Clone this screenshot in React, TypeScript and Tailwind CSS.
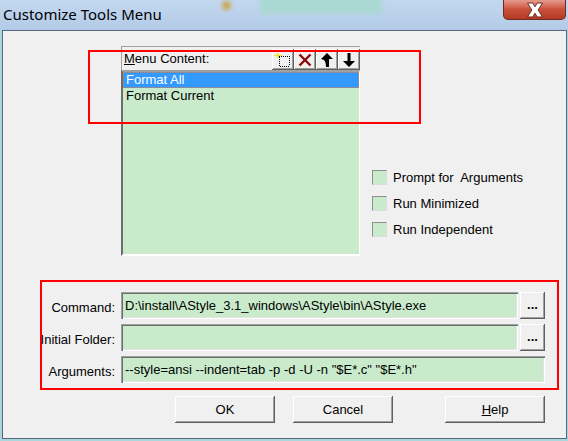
import React from "react"

const sunken =
  "shadow-[inset_1px_1px_0_#a0a0a0,inset_2px_2px_0_#6d6d6d,inset_-1px_-1px_0_#ffffff,inset_-2px_-2px_0_#e3e3e3]"
const raised =
  "shadow-[inset_-1px_-1px_0_#5f5f5f,inset_1px_1px_0_#ffffff,inset_-2px_-2px_0_#a0a0a0]"

function ToolButton({ children }: { children: React.ReactNode }) {
  return (
    <div className={`flex h-[21px] w-[22px] items-center justify-center bg-[#f0f0f0] ${raised}`}>
      {children}
    </div>
  )
}

function Checkbox({ label }: { label: string }) {
  return (
    <div className="flex h-[15px] items-center gap-[6px]">
      <div className="h-[15px] w-[15px] border border-[#8e8f8f] border-r-[#dcdcdc] border-b-[#dcdcdc] bg-[#c9ebcc]" />
      <span className="whitespace-pre">{label}</span>
    </div>
  )
}

function Field({
  label,
  value,
  browse,
}: {
  label: string
  value: string
  browse?: boolean
}) {
  return (
    <div className="flex h-[27px] items-center">
      <div className="w-[112px] pt-[4px] text-right whitespace-nowrap">{label}</div>
      <div
        className={`ml-[6px] flex h-[27px] items-center bg-[#c9ebcc] pl-[4px] pt-[1px] whitespace-pre ${sunken} ${
          browse ? "w-[397px]" : "w-[424px]"
        }`}
      >
        {value}
      </div>
      {browse && (
        <div
          className={`ml-[2px] flex h-[27px] w-[25px] items-center justify-center pb-[2px] font-bold ${raised}`}
        >
          ...
        </div>
      )}
    </div>
  )
}

function DialogButton({ children }: { children: React.ReactNode }) {
  return (
    <div
      className={`flex h-[27px] w-[100px] items-center justify-center bg-[#f0f0f0] ${raised}`}
    >
      {children}
    </div>
  )
}

export default function App() {
  return (
    <div
      className="flex h-[441px] w-[568px] flex-col overflow-hidden bg-[#a9d5de] text-[13px] text-black"
      style={{ fontFamily: '"Liberation Sans", Arial, sans-serif' }}
    >
      {/* title bar */}
      <div className="relative flex h-[30px] shrink-0 items-start justify-between bg-gradient-to-b from-[#c3d7ef] to-[#b3cbe8]">
        <div className="absolute left-[260px] top-[-4px] h-[18px] w-[122px] bg-[#a9d8d2] blur-[2px]" />
        <div className="absolute left-[222px] top-[1px] h-[9px] w-[9px] rounded-full bg-[#c9a64a] blur-[2px]" />
        <span
          className="relative ml-[3px] mt-[3px] text-[15px] leading-[22px] text-black"
          style={{ fontFamily: '"Noto Sans", "Open Sans", sans-serif' }}
        >
          Customize Tools Menu
        </span>
        <div className="relative mr-[2px] flex h-[20px] w-[63px] items-center justify-center rounded-b-[5px] border border-t-0 border-[#6b2c22] bg-gradient-to-b from-[#e59a8b] via-[#c9503b] to-[#b53a24]">
          <svg width="22" height="16" viewBox="0 0 20 15">
            <path
              d="M3 1 L8 1 L10 4.5 L12 1 L17 1 L13 7.5 L17 14 L12 14 L10 10.5 L8 14 L3 14 L7 7.5 Z"
              fill="#ffffff"
              stroke="#5a1a10"
              strokeWidth="0.8"
            />
          </svg>
        </div>
      </div>

      {/* client area */}
      <div className="relative ml-[2px] h-[409px] w-[565px] shrink-0 border border-[#576a7c] bg-[#f0f0f0]">
        <div className="flex pl-[118px] pt-[15px]">
          {/* menu content panel */}
          <div className="flex w-[239px] flex-col">
            <div className="flex h-[24px] items-center justify-between border-t border-l border-[#a0a0a0]">
              <span className="pl-[2px]">
                <span className="underline">M</span>enu Content:
              </span>
              <div className="flex self-end">
                <ToolButton>
                  <svg width="18" height="18" viewBox="0 0 18 18" shapeRendering="crispEdges">
                    <rect x="5" y="5" width="10" height="10" fill="none" stroke="#000" strokeDasharray="1 1" />
                    <path d="M4 1 L5 4 L8 4.5 L5 5 L4 8 L3 5 L0 4.5 L3 4 Z" fill="#f2e21c" />
                  </svg>
                </ToolButton>
                <ToolButton>
                  <svg width="16" height="16" viewBox="0 0 16 16">
                    <path d="M2.5 2.5 L13.5 13.5 M13.5 2.5 L2.5 13.5" stroke="#8a0a0a" strokeWidth="2.4" />
                  </svg>
                </ToolButton>
                <ToolButton>
                  <svg width="14" height="16" viewBox="0 0 14 16">
                    <path d="M7 1 L13 7 L9 7 L9 15 L6 15 Q6 10 4 8 L1 7 Z" fill="#000" />
                  </svg>
                </ToolButton>
                <ToolButton>
                  <svg width="14" height="16" viewBox="0 0 14 16">
                    <path d="M5.5 1 L8.5 1 L8.5 9 L13 9 L7 15 L1 9 L5.5 9 Z" fill="#000" />
                  </svg>
                </ToolButton>
              </div>
            </div>
            <div className="h-[186px] border-t-2 border-l-2 border-r border-b-2 border-t-[#a0a0a0] border-l-[#6d6d6d] border-r-[#ffffff] border-b-[#ffffff] bg-[#c9ebcc]">
              <div className="flex h-[16px] items-center border border-dotted border-[#e08040] bg-[#3399ff] pl-[2px] text-white">
                Format All
              </div>
              <div className="flex h-[16px] items-center pl-[3px]">Format Current</div>
            </div>
          </div>

          {/* options */}
          <div className="ml-[12px] flex flex-col gap-[11px] pt-[124px]">
            <Checkbox label="Prompt for  Arguments" />
            <Checkbox label="Run Minimized" />
            <Checkbox label="Run Independent" />
          </div>
        </div>

        {/* fields */}
        <div className="mt-[36px] flex flex-col gap-[5px]">
          <Field label="Command:" value="D:\install\AStyle_3.1_windows\AStyle\bin\AStyle.exe" browse />
          <Field label="Initial Folder:" value="" browse />
          <Field label="Arguments:" value={'--style=ansi --indent=tab -p -d -U -n "$E*.c" "$E*.h"'} />
        </div>

        {/* dialog buttons */}
        <div className="mt-[13px] flex pl-[172px]">
          <DialogButton>OK</DialogButton>
          <div className="ml-[18px]">
            <DialogButton>Cancel</DialogButton>
          </div>
          <div className="ml-[52px]">
            <DialogButton>
              <span>
                <span className="underline">H</span>elp
              </span>
            </DialogButton>
          </div>
        </div>

        {/* annotation boxes */}
        <div className="pointer-events-none absolute left-[85px] top-[19px] h-[74px] w-[333px] border-2 border-[#ff0000]" />
        <div className="pointer-events-none absolute left-[37px] top-[249px] h-[110px] w-[519px] border-2 border-[#ff0000]" />
      </div>
    </div>
  )
}
